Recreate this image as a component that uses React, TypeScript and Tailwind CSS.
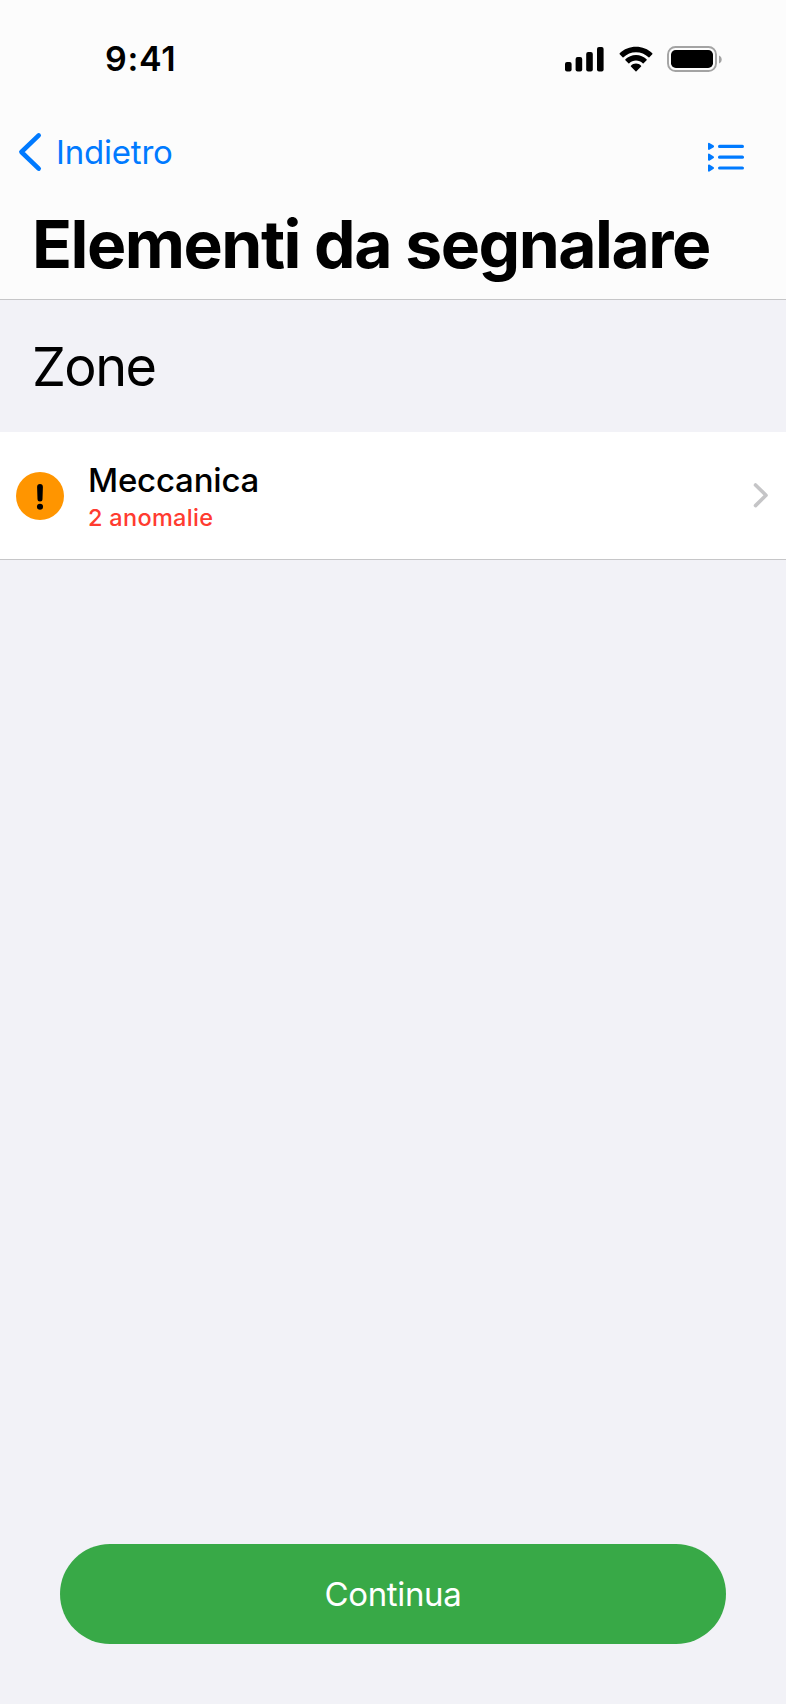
import React from "react";

function SignalIcon() {
  return (
    <svg className="h-[26px] w-[40px]" viewBox="0 0 40 26" fill="currentColor">
      <rect x="0" y="16" width="6.6" height="9.5" rx="2" />
      <rect x="10.6" y="11" width="6.6" height="14.5" rx="2" />
      <rect x="21.2" y="6" width="6.6" height="19.5" rx="2" />
      <rect x="32" y="1" width="6.6" height="24.5" rx="2" />
    </svg>
  );
}

function WifiIcon() {
  return (
    <svg className="h-[26px] w-[36px]" viewBox="0 0 36 26" fill="currentColor">
      <path d="M18 6.2c4.8 0 9.2 1.85 12.5 5 .25.25.65.25.9 0l2.9-2.9c.25-.25.25-.7 0-.95C29.9 3.1 24.200 .8 18 .8S6.100 3.100 1.700 7.350c-.25.25-.25.7 0 .95l2.900 2.900c.25.25.65.25.9 0C8.800 8.050 13.200 6.200 18 6.200z" />
      <path d="M18 14.600c2.550 0 4.900.95 6.700 2.600.25.25.65.25.9 0l3-2.950c.25-.25.25-.7 0-.95C25.800 10.700 22.100 9.100 18 9.100s-7.800 1.600-10.600 4.200c-.25.25-.25.7 0 .95l3 2.950c.25.25.65.25.9 0 1.800-1.650 4.150-2.600 6.700-2.600z" />
      <path d="M23.100 19.700c.27.26.26.66 0 .92l-4.650 4.600c-.25.25-.65.25-.9 0l-4.650-4.600c-.26-.26-.27-.66 0-.92C14.200 18.400 16 17.600 18 17.600s3.800.8 5.100 2.100z" />
    </svg>
  );
}

function BatteryIcon() {
  return (
    <svg className="h-[26px] w-[56px]" viewBox="0 0 56 26">
      <rect x="1" y="1" width="48" height="24" rx="7.500" fill="none" stroke="#a3a3a3" strokeWidth="1.900" />
      <rect x="4" y="4" width="42" height="18" rx="4.800" fill="#000" />
      <path d="M52 9.500v8c1.700-.7 2.700-2.200 2.700-4s-1-3.300-2.700-4z" fill="#a3a3a3" />
    </svg>
  );
}

function BackChevron() {
  return (
    <svg className="h-[40px] w-[24px]" viewBox="0 0 24 40" fill="none" stroke="currentColor" strokeWidth="4.600" strokeLinecap="round" strokeLinejoin="round">
      <path d="M20.700 3.400 3.400 20l17.300 16.600" />
    </svg>
  );
}

function ListIcon() {
  return (
    <svg className="h-[32px] w-[38px]" viewBox="0 0 38 32" fill="currentColor">
      {[5.400, 16.200, 27].map((y) => (
        <g key={y} transform={`translate(0 ${y})`}>
          <path d="M.9-2.700 4.900-.3Q5.400 0 4.900.3L.9 2.700z" stroke="currentColor" strokeWidth="1.800" strokeLinejoin="round" />
          <rect x="10" y="-1.600" width="26" height="3.200" rx="1.600" />
        </g>
      ))}
    </svg>
  );
}

function WarningIcon() {
  return (
    <svg className="size-12" viewBox="0 0 48 48">
      <circle cx="24" cy="24" r="24" fill="#ff9500" />
      <path d="M21.100 14.900a2.900 2.900 0 0 1 5.800 0l-.4 12a2.500 2.500 0 0 1-5 0z" fill="#000" />
      <circle cx="24" cy="34.700" r="3.050" fill="#000" />
    </svg>
  );
}

function DisclosureChevron() {
  return (
    <svg className="h-[26px] w-[16px]" viewBox="0 0 16 26" fill="none" stroke="#c5c5c7" strokeWidth="3.600" strokeLinecap="round" strokeLinejoin="round">
      <path d="M2.500 2 13 12.300 2.500 22.600" />
    </svg>
  );
}

export default function App() {
  return (
    <div className="flex h-[1704px] w-[786px] flex-col bg-[#f2f2f7] font-['Inter',sans-serif] text-black">
      <header className="flex h-[300px] flex-col border-b border-[#c6c6c8] bg-[#fcfcfc]">
        <div className="flex h-[120px] items-start justify-between pr-[63px] pl-[105px]">
          <span className="pt-[42px] text-[34px] leading-[34px] font-semibold tracking-[0.7px]">9:41</span>
          <div className="flex items-center pt-[46px]">
            <SignalIcon />
            <span className="w-[12.500px]" />
            <WifiIcon />
            <span className="w-[13.500px]" />
            <BatteryIcon />
          </div>
        </div>
        <nav className="flex h-[85px] items-start justify-between pr-[40px] pl-[18px] text-[#007aff]">
          <button className="flex items-center pt-[12px]">
            <BackChevron />
            <span className="pl-[14px] text-[33px] leading-[40px] tracking-[-0.2px]">Indietro</span>
          </button>
          <button className="pt-[21px]">
            <ListIcon />
          </button>
        </nav>
        <h1 className="pt-[6px] pl-[32px] text-[66px] leading-[66px] font-bold tracking-[-1.500px] whitespace-nowrap">Elementi da segnalare</h1>
      </header>
      <main className="flex grow flex-col">
        <h2 className="h-[132px] pt-[40px] pl-[32px] text-[54px] leading-[54px] tracking-[-1.600px]">Zone</h2>
        <button className="flex h-[128px] items-center border-b border-[#c6c6c8] bg-white pr-[17px] pl-[16px] text-left">
          <WarningIcon />
          <span className="flex grow flex-col pt-[3px] pl-[24px]">
            <span className="text-[33px] leading-[40px] font-medium tracking-[-0.2px]">Meccanica</span>
            <span className="text-[23.500px] leading-[35px] font-[450] tracking-[0.3px] text-[#ff3b30]">2 anomalie</span>
          </span>
          <DisclosureChevron />
        </button>
      </main>
      <footer className="px-[60px] pb-[60px]">
        <button className="flex h-[100px] w-full items-center justify-center rounded-[50px] bg-[#38a947] text-[33px] leading-[40px] tracking-[-0.350px] text-white">Continua</button>
      </footer>
    </div>
  );
}
